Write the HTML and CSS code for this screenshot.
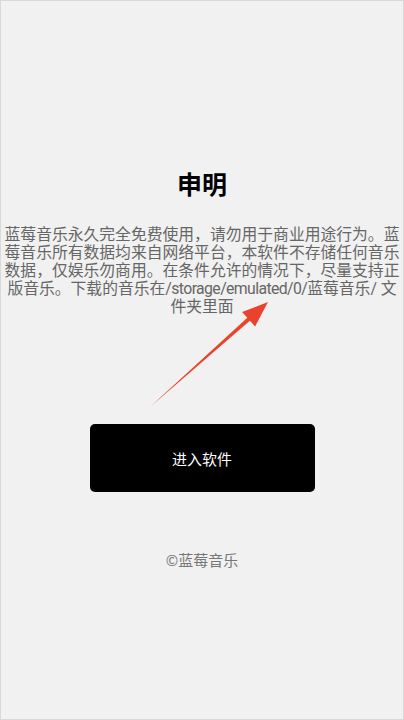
FILE: index.html
```html
<!DOCTYPE html>
<html>
  <head>
    <meta charset="utf-8" />
    <meta name="viewport" content="width=device-width, initial-scale=1.0" />
    <title>蓝莓音乐 - 申明</title>
    <link rel="stylesheet" href="styles.css">
  </head>
  <body>
    <div class="screen">
      <h1 class="title">申明</h1>
      <p class="notice">
        蓝莓音乐永久完全免费使用，请勿用于商业用途行为。蓝莓音乐所有数据均来自网络平台，本软件不存储任何音乐数据，仅娱乐勿商用。在条件允许的情况下，尽量支持正版音乐。下载的音乐在<span class="path">/storage/emulated/0/</span>蓝莓音乐/ 文件夹里面
      </p>
      <div class="enter-btn">进入软件</div>
      <div class="footer">©蓝莓音乐</div>

      <!-- 红色指示箭头 -->
      <svg class="arrow" viewBox="0 0 404 720" width="404" height="720">
        <polygon
          fill="#e8432d"
          points="150,407 247.3,317.8 242.1,312.1 268,302 255.1,326.5 249.9,320.8"
        />
      </svg>
    </div>
  </body>
</html>
```

FILE: styles.css
```css
* {
  margin: 0;
  padding: 0;
  box-sizing: border-box;
}

body {
  font-family: "Noto Sans CJK SC", "Noto Sans", sans-serif;
  background-color: #f1f1f1;
  color: #000;
}

.screen {
  position: relative;
  width: 404px;
  height: 720px;
  border: 1px solid #d9d9d9;
  display: flex;
  flex-direction: column;
  align-items: center;
  padding: 166px 1px 0 1px;
}

.title {
  font-size: 25px;
  line-height: 32px;
  font-weight: bold;
  color: #000;
  margin-bottom: 27px;
}

.notice {
  font-family: Roboto, "Noto Sans CJK SC", sans-serif;
  font-size: 15.8px;
  line-height: 18px;
  color: #666;
  text-align: center;
}

.notice .path {
  letter-spacing: -0.6px;
}

.enter-btn {
  width: 225px;
  height: 68px;
  margin-top: 108px;
  background-color: #000;
  border-radius: 5px;
  color: #fff;
  font-size: 15px;
  display: flex;
  align-items: center;
  justify-content: center;
}

.footer {
  margin-top: 57px;
  font-size: 15px;
  line-height: 22px;
  color: #777;
}

.arrow {
  position: absolute;
  top: -1px;
  left: -1px;
  pointer-events: none;
}
```
